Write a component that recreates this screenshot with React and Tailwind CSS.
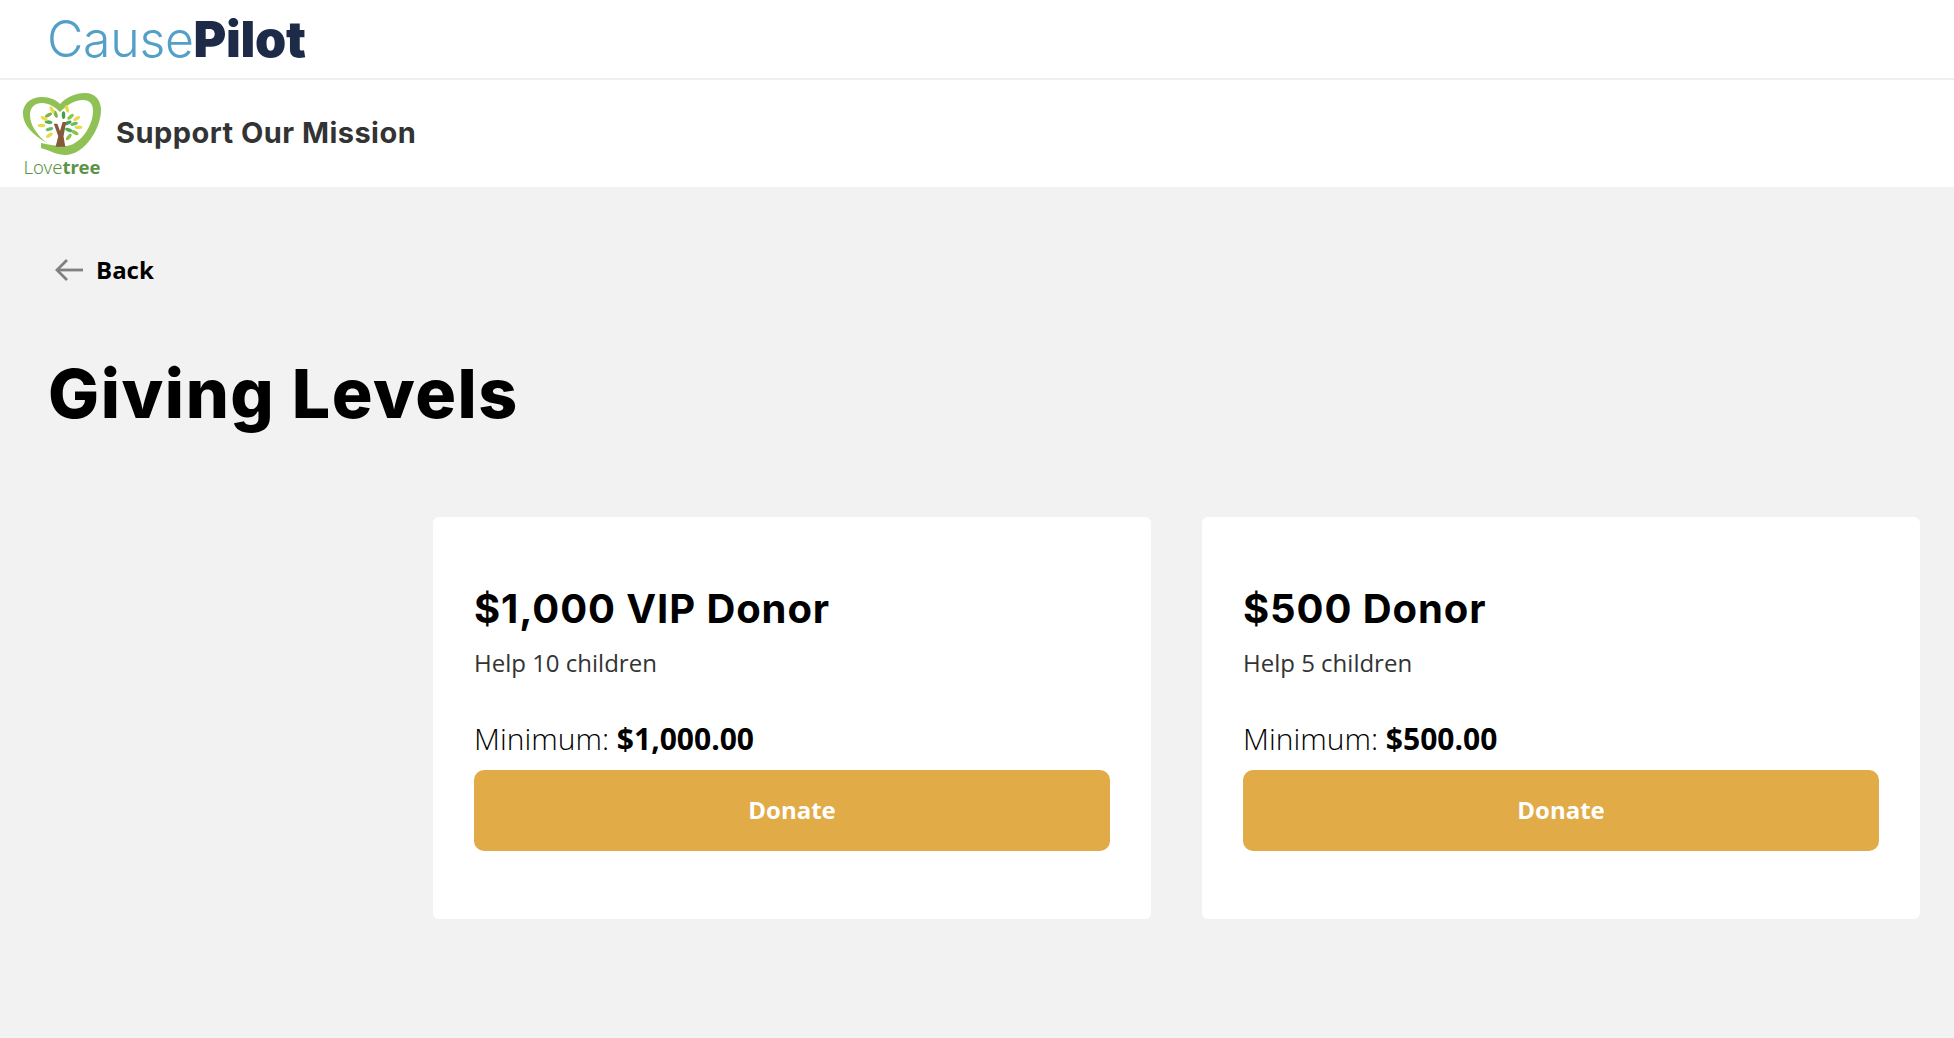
const LEVELS = [
  { title: '$1,000 VIP Donor', help: 'Help 10 children', min: '$1,000.00' },
  { title: '$500 Donor', help: 'Help 5 children', min: '$500.00' },
];

function LovetreeLogo() {
  const leaves = [
    [-13, -17, -30, '#7cb342'], [-5, -18, 70, '#7cb342'], [4, -17, 90, '#43a047'], [12, -15, -40, '#8bc34a'],
    [-13, -9, 10, '#4caf50'], [9, -8, -25, '#43a047'], [16, -7, -15, '#66bb6a'],
    [-12, -1, -15, '#66bb6a'], [10, 0, 20, '#4caf50'], [17, 3, 30, '#8bc34a'],
    [-18, -13, 30, '#e6dc4a'], [-9, -23, 60, '#e6dc4a'], [8, -24, 70, '#e6dc4a'], [19, -13, -30, '#e6dc4a'],
    [-21, -5, 0, '#e6dc4a'], [21, -3, 0, '#e6dc4a'], [-12, 6, -35, '#e6dc4a'], [10, 8, -50, '#8bc34a'],
  ];
  return (
    <div className="flex w-[78px] flex-col items-center">
      <svg width="78" height="63" viewBox="0 0 78 63">
        <path
          d="M24 50 C10 42 0 32 0 21 C0 9 10 4 19 4 C27 4 33 7 37 11 C44 4 52 0 62 0 C72 0 78 7 78 17 C78 35 62 62 42 62 C34 62 28 58 18 55 L18 50 C26 52 34 53 42 53 C56 53 70 34 70 18 C70 11 67 7 60 7 C51 7 44 12 37 19 C32 14 26 10 19 10 C12 10 7 14 7 22 C7 32 14 42 24 50 Z"
          fill="#8fc155"
        />
        <g transform="translate(37 37) scale(0.88)">
          {leaves.map(([x, y, r, c], i) => (
            <ellipse key={i} cx={x} cy={y} rx="4.4" ry="2" fill={c} transform={`rotate(${r} ${x} ${y})`} />
          ))}
          <path d="M-5 19 L-2 7 L-7 -7 L-3 -7 L0 1 L3 -9 L7 -9 L4 7 L6 19 Z" fill="#85593a" />
        </g>
      </svg>
      <div className="mt-[3px] font-['Noto_Sans',sans-serif] text-[18.5px] leading-[16px] text-[#5b9445]">
        <span className="font-light">Love</span>
        <span className="font-bold">tree</span>
      </div>
    </div>
  );
}

function LevelCard({ title, help, min }) {
  return (
    <div className="flex w-[718px] flex-col rounded-md bg-white px-[41px] pt-[68px] pb-[68px]">
      <h2 className="font-['Inter',sans-serif] text-[40px] leading-[48px] font-bold tracking-[0.0225em] text-black">{title}</h2>
      <p className="mt-[13px] text-[24px] leading-[34px] font-normal text-[#333]">{help}</p>
      <p className="mt-[40px] text-[30px] leading-[38px] font-light text-black">
        Minimum: <span className="font-bold">{min}</span>
      </p>
      <button className="mt-[12px] h-[81px] rounded-[10px] bg-[#e1ab48] pb-[2px] text-[24px] font-bold text-white">Donate</button>
    </div>
  );
}

export default function App() {
  return (
    <div className="flex min-h-[1038px] flex-col bg-[#f2f2f2] font-['Open_Sans',sans-serif]">
      <header className="flex h-[80px] items-center border-b-2 border-[#efefef] bg-white pl-[47px]">
        <div className="font-['Inter',sans-serif] text-[50px] leading-none tracking-[-0.006em]">
          <span className="font-light text-[#529fc8]">Cause</span>
          <span className="font-black text-[#1d2b49]">Pilot</span>
        </div>
      </header>

      <div className="flex h-[107px] items-center bg-white pl-[23px]">
        <LovetreeLogo />
        <h3 className="ml-[15px] mb-[2px] font-['Inter',sans-serif] text-[29px] font-bold tracking-[0.016em] text-[#333]">Support Our Mission</h3>
      </div>

      <main className="flex flex-col pr-[34px] pl-[48px]">
        <a className="mt-[66px] flex h-[34px] items-center gap-[13px] pl-[7px] text-[24px] leading-[34px] font-bold text-black">
          <svg width="28" height="24" viewBox="0 0 28 24" fill="none" stroke="#808080" strokeWidth="2.8">
            <path d="M28 12H2" />
            <path d="M12 2L2 12L12 22" />
          </svg>
          Back
        </a>
        <h1 className="mt-[64px] font-['Inter',sans-serif] text-[68px] leading-[84px] font-extrabold tracking-[0.0225em] text-black">
          Giving Levels
        </h1>
        <div className="mt-[82px] flex justify-end gap-[51px]">
          {LEVELS.map((l) => (
            <LevelCard key={l.title} {...l} />
          ))}
        </div>
      </main>
    </div>
  );
}
